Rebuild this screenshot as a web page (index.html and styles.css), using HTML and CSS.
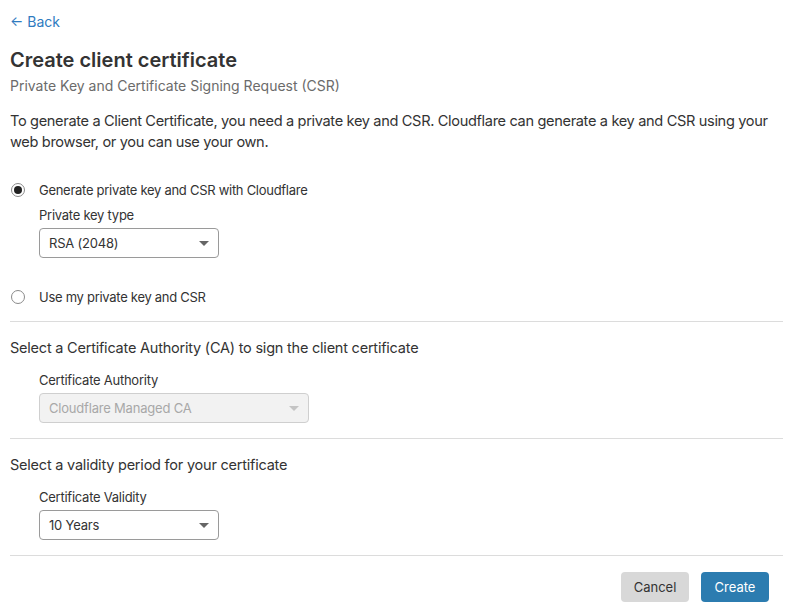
FILE: index.html
```html
<!DOCTYPE html>
<html>
<head>
<meta charset="utf-8">
<link rel="stylesheet" href="styles.css">
</head>
<body>
<div class="page">
  <a class="back" href="#"><span class="arrow">←</span> Back</a>
  <h1 class="title">Create client certificate</h1>
  <div class="subtitle">Private Key and Certificate Signing Request (CSR)</div>
  <p class="intro">To generate a Client Certificate, you need a private key and CSR. Cloudflare can generate a key and CSR using your web browser, or you can use your own.</p>

  <div class="option">
    <div class="radio-row"><span class="radio checked"></span><span class="radio-label">Generate private key and CSR with Cloudflare</span></div>
    <div class="field">
      <div class="label">Private key type</div>
      <div class="select w180"><span>RSA (2048)</span><span class="caret"></span></div>
    </div>
  </div>
  <div class="option second">
    <div class="radio-row"><span class="radio"></span><span class="radio-label">Use my private key and CSR</span></div>
  </div>

  <div class="section">
    <div class="heading">Select a Certificate Authority (CA) to sign the client certificate</div>
    <div class="field">
      <div class="label">Certificate Authority</div>
      <div class="select w270 disabled"><span>Cloudflare Managed CA</span><span class="caret"></span></div>
    </div>
  </div>

  <div class="section">
    <div class="heading">Select a validity period for your certificate</div>
    <div class="field">
      <div class="label">Certificate Validity</div>
      <div class="select w180"><span>10 Years</span><span class="caret"></span></div>
    </div>
  </div>

  <div class="actions">
    <button class="btn cancel">Cancel</button>
    <button class="btn create">Create</button>
  </div>
</div>
</body>
</html>
```

FILE: styles.css
```css
* { box-sizing: border-box; }
body {
  margin: 0;
  font-family: Inter, "Noto Sans", sans-serif;
  color: #333;
  background: #fff;
}
.page {
  padding: 11px 2px 0 10px;
}
.back {
  display: inline-block;
  color: #2f7bbf;
  text-decoration: none;
  font-size: 14px;
  line-height: 20px;
}
.back .arrow { font-size: 14px; }
.title {
  margin: 15px 0 0;
  font-size: 20px;
  line-height: 26px;
  font-weight: 600;
  color: #333;
}
.subtitle {
  font-size: 14px;
  line-height: 20px;
  color: #6b6b6b;
  margin-top: 3px;
}
.intro {
  margin: 15px 0 0;
  font-size: 14.6px;
  line-height: 21px;
  color: #333;
  letter-spacing: -0.35px;
}
.option { margin-top: 28px; }
.option.second { margin-top: 30px; padding-bottom: 15px; border-bottom: 1px solid #dcdcdc; }
.radio-row {
  display: flex;
  align-items: center;
  height: 18px;
}
.radio {
  width: 14px;
  height: 14px;
  border: 1px solid #8a8a8a;
  border-radius: 50%;
  margin-left: 1px;
  margin-right: 14px;
  position: relative;
  flex: none;
}
.radio.checked::after {
  content: "";
  position: absolute;
  left: 2px; top: 2px;
  width: 8px; height: 8px;
  border-radius: 50%;
  background: #222;
}
.radio-label {
  font-size: 13px;
  color: #333;
  letter-spacing: -0.28px;
}
.field {
  padding-left: 29px;
}
.label {
  font-size: 13px;
  line-height: 18px;
  color: #333;
  letter-spacing: -0.25px;
}
.option .label { margin-top: 7px; }
.select {
  margin-top: 4px;
  height: 30px;
  border: 1px solid #9a9a9a;
  border-radius: 4px;
  display: flex;
  align-items: center;
  justify-content: space-between;
  padding: 0 9px 0 9px;
  font-size: 13px;
  color: #333;
  letter-spacing: -0.2px;
}
.w180 { width: 180px; }
.w270 { width: 270px; }
.select.disabled {
  background: #f2f2f2;
  border-color: #cfcfcf;
  color: #a8a8a8;
}
.caret {
  width: 0; height: 0;
  border-left: 5px solid transparent;
  border-right: 5px solid transparent;
  border-top: 5px solid #666;
}
.select.disabled .caret { border-top-color: #c4c4c4; }
.section {
  padding-top: 16px;
  padding-bottom: 15px;
  border-bottom: 1px solid #dcdcdc;
}
.heading {
  font-size: 14.5px;
  line-height: 20px;
  color: #333;
  letter-spacing: -0.22px;
}
.section .label { margin-top: 13px; }
.actions {
  display: flex;
  justify-content: flex-end;
  gap: 12px;
  padding: 16px 14px 0 0;
}
.btn {
  font-family: inherit;
  font-size: 13px;
  height: 30px;
  border: none;
  border-radius: 4px;
  padding: 0;
  cursor: pointer;
}
.cancel { background: #d8d8d8; color: #333; width: 68px; }
.create { background: #2c7cb0; color: #fff; width: 68px; }
```
